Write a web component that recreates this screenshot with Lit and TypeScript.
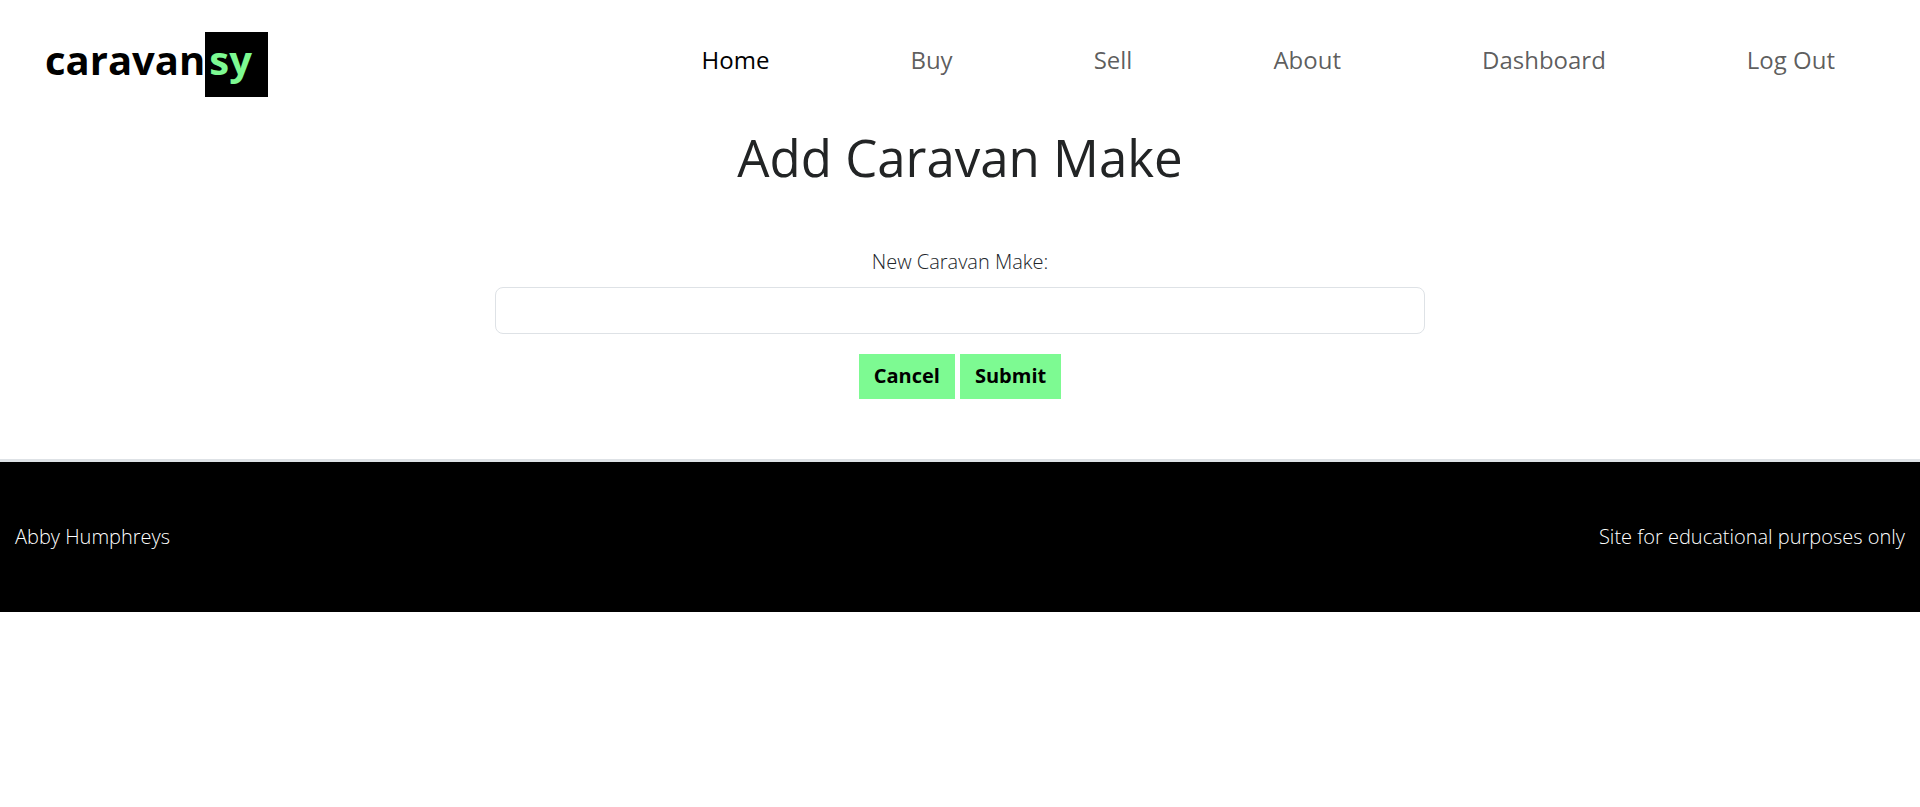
import { LitElement, html, css } from "lit";
import { customElement } from "lit/decorators.js";

const NAV_LINKS = ["Home", "Buy", "Sell", "About", "Dashboard", "Log Out"];

@customElement("app-root")
export class AppRoot extends LitElement {
  static styles = css`
    :host {
      display: block;
      font-family: "Open Sans", sans-serif;
      font-size: 20px;
      font-weight: 300;
      line-height: 30px;
      color: #212529;
      background: #fff;
    }
    *, *::before, *::after { box-sizing: border-box; }
    .navbar {
      display: flex;
      align-items: center;
      justify-content: space-between;
      padding: 30px 15px 37px 45px;
    }
    .brand {
      font-size: 40px;
      font-weight: 700;
      line-height: 60px;
      color: #000;
      text-decoration: none;
    }
    .brand-accent {
      padding: 0 16px 10px 4px;
      background: #000;
      color: #7dfa92;
    }
    .links {
      display: flex;
      gap: 1px;
      margin: 0;
      padding: 0;
      list-style: none;
    }
    .link {
      display: block;
      padding: 8px 70px;
      font-size: 24px;
      font-weight: 400;
      line-height: 36px;
      color: rgba(0, 0, 0, 0.65);
      text-decoration: none;
    }
    .link.active { color: #000; }
    .title {
      margin: 0;
      text-align: center;
      font-size: 51px;
      font-weight: 400;
      line-height: 60px;
      color: #222425;
    }
    .form {
      display: flex;
      flex-direction: column;
      align-items: center;
      width: 50%;
      margin: 0 auto;
      padding: 60px 15px;
    }
    .label { margin-bottom: 10px; }
    .field {
      width: 100%;
      height: 47px;
      padding: 8px 15px;
      border: 1px solid #dee2e6;
      border-radius: 8px;
      background: #fff;
      font: inherit;
      color: inherit;
    }
    .actions {
      display: flex;
      gap: 5px;
      margin-top: 20px;
    }
    .btn {
      padding: 7px 15px 8px;
      border: 0;
      background: #7dfa92;
      color: #000;
      font: inherit;
      font-weight: 700;
    }
    .footer {
      display: flex;
      align-items: center;
      justify-content: space-between;
      padding: 60px 15px;
      border-top: 3px solid #dee2e6;
      background: #000;
      color: #fff;
    }
  `;

  render() {
    return html`
      <header>
        <nav class="navbar">
          <a class="brand" href="#">caravan<span class="brand-accent">sy</span></a>
          <ul class="links">
            ${NAV_LINKS.map(
              (name, i) => html`<li><a class="link ${i === 0 ? "active" : ""}" href="#">${name}</a></li>`
            )}
          </ul>
        </nav>
      </header>
      <main>
        <h1 class="title">Add Caravan Make</h1>
        <form class="form">
          <label class="label" for="make">New Caravan Make:</label>
          <input class="field" id="make" type="text" name="make" />
          <div class="actions">
            <button class="btn" type="button">Cancel</button>
            <button class="btn" type="submit">Submit</button>
          </div>
        </form>
      </main>
      <footer class="footer">
        <span>Abby Humphreys</span>
        <span>Site for educational purposes only</span>
      </footer>
    `;
  }
}
